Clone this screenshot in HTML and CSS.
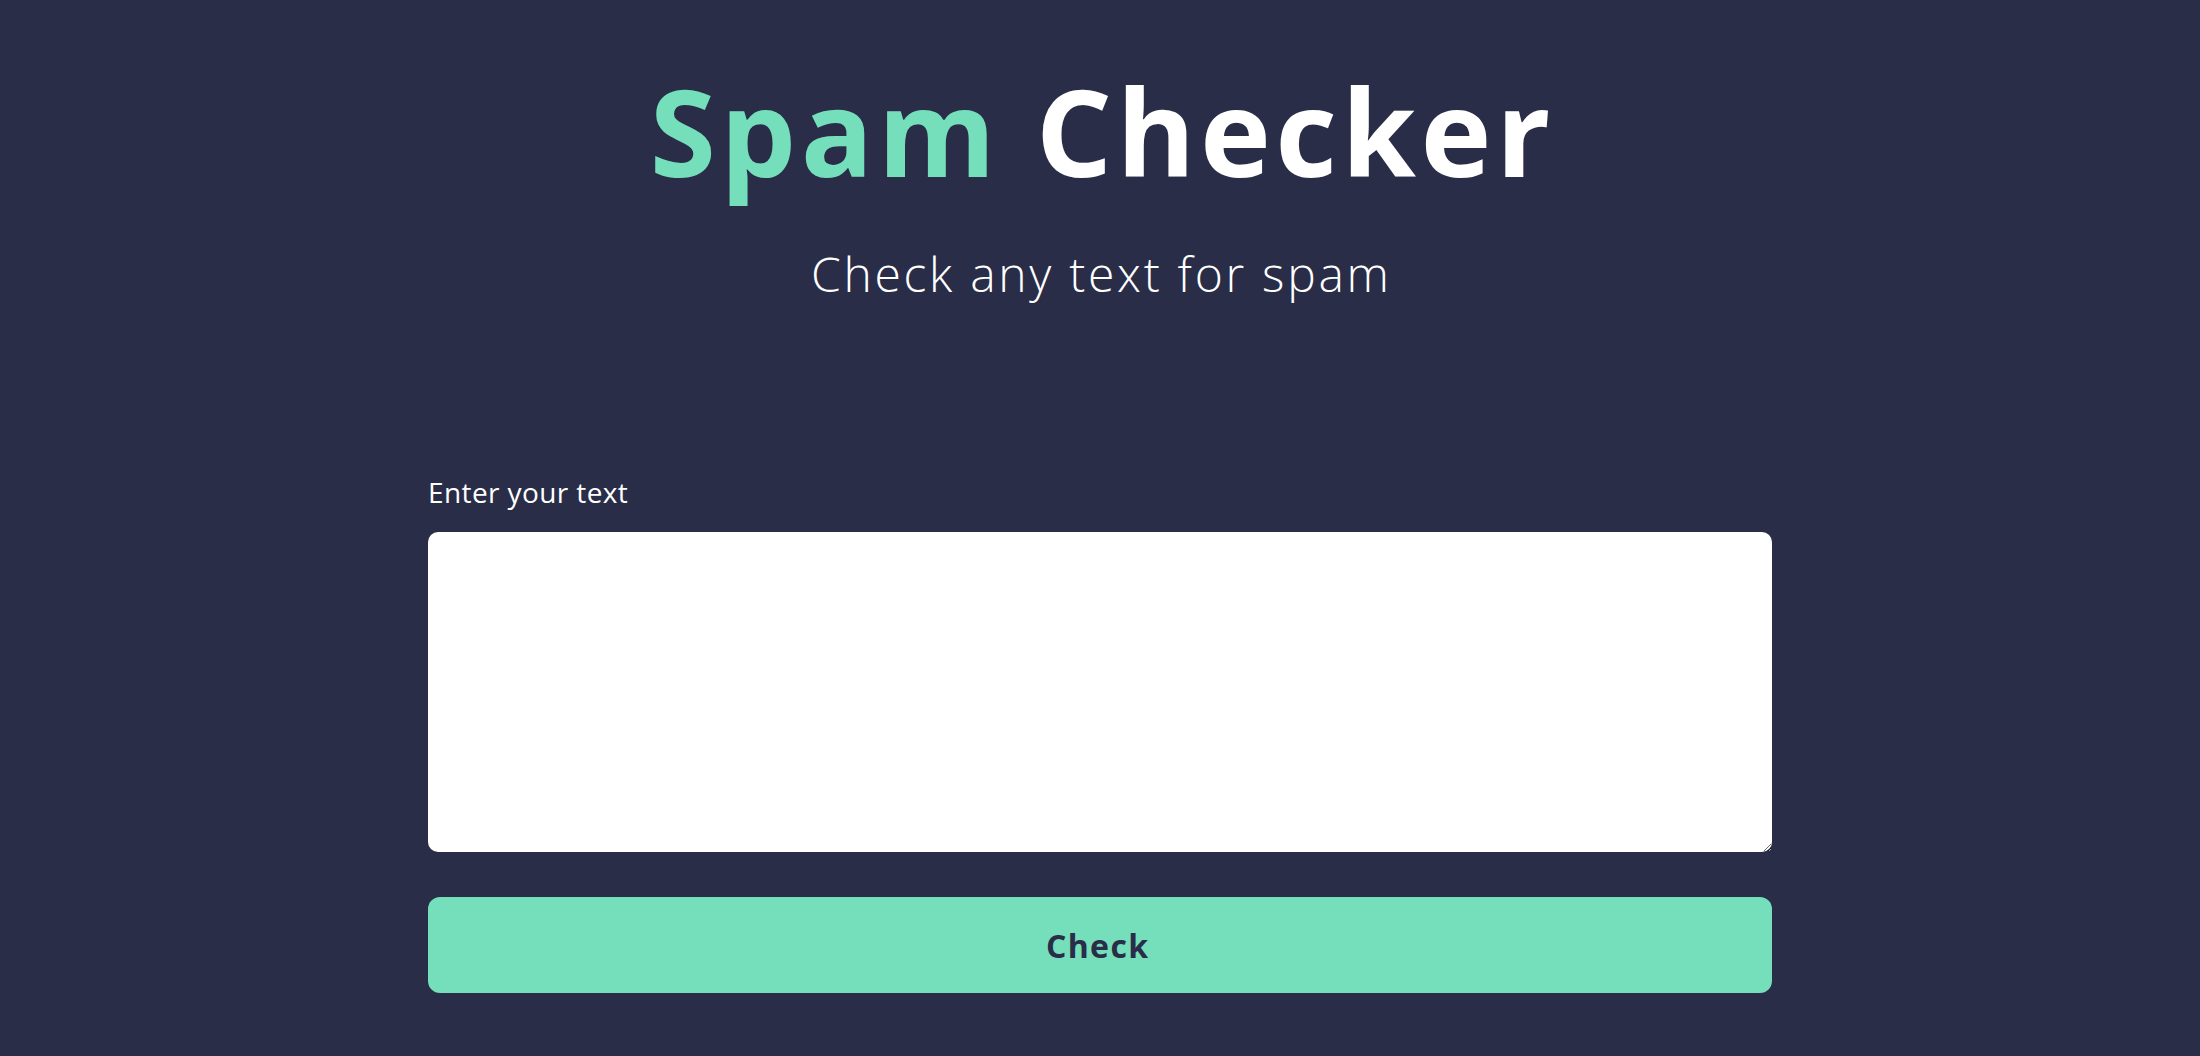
FILE: index.html
```html
<!DOCTYPE html>
<html lang="en">
<head>
<meta charset="utf-8">
<title>Spam Checker</title>
<link rel="stylesheet" href="styles.css">
</head>
<body>
<main class="page">
  <header class="hero">
    <h1 class="title"><span class="accent">Spam</span> Checker</h1>
    <p class="subtitle">Check any text for spam</p>
  </header>
  <form class="checker">
    <label class="label" for="text">Enter your text</label>
    <textarea class="input" id="text"></textarea>
    <button class="button" type="button">Check</button>
  </form>
</main>
</body>
</html>
```
FILE: styles.css
```css
html, body {
  margin: 0;
  padding: 0;
  background: #292d48;
}
body {
  font-family: "Open Sans", "Liberation Sans", sans-serif;
  color: #ffffff;
}
.page {
  display: flex;
  flex-direction: column;
  align-items: center;
}
.hero {
  text-align: center;
  padding-top: 59px;
}
.title {
  margin: 0;
  font-size: 120px;
  line-height: 1.2;
  font-weight: 700;
  letter-spacing: 4.5px;
  padding-left: 4.5px;
  color: #ffffff;
}
.accent {
  color: #75dfbb;
}
.subtitle {
  margin: 42px 0 0;
  font-size: 48px;
  line-height: 1.2;
  font-weight: 300;
  letter-spacing: 2.7px;
  padding-left: 2.7px;
}
.checker {
  width: 1344px;
  display: flex;
  flex-direction: column;
  margin-top: 173px;
}
.label {
  font-size: 28px;
  line-height: 1.2;
  font-weight: 500;
  letter-spacing: 0.4px;
  margin-bottom: 23px;
}
.input {
  box-sizing: border-box;
  height: 320px;
  border: none;
  border-radius: 10px;
  background: #ffffff;
  padding: 12px;
  font-family: inherit;
  font-size: 24px;
}
.button {
  margin-top: 45px;
  height: 96px;
  border: none;
  border-radius: 12px;
  background: #75dfbb;
  color: #292d48;
  font-family: inherit;
  font-size: 32px;
  font-weight: 700;
  letter-spacing: 1.4px;
  padding-left: 1.4px;
}
```
